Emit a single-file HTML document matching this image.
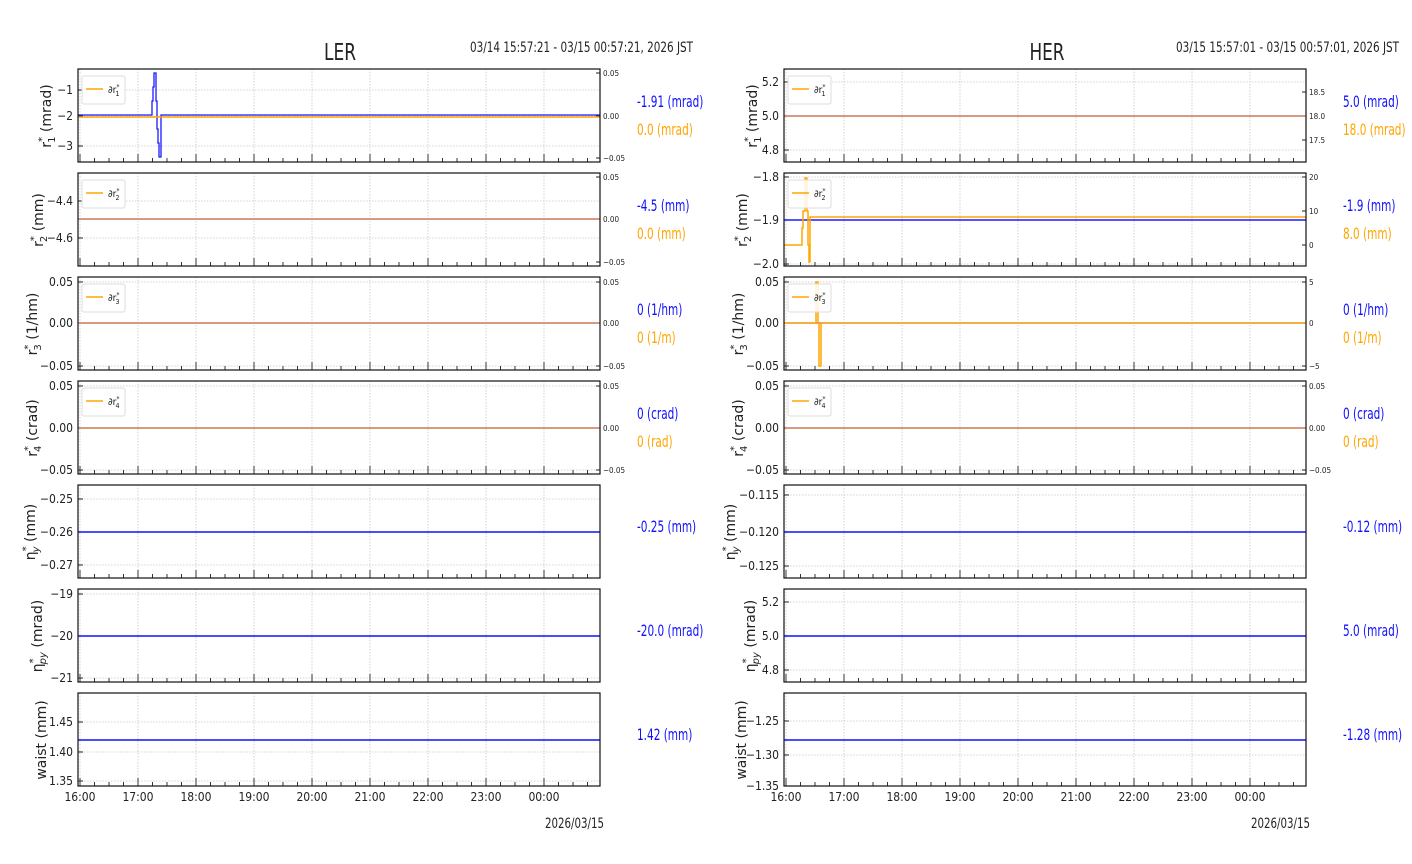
<!DOCTYPE html>
<html><head><meta charset="utf-8"><style>
html,body{margin:0;padding:0;background:#fff;}
svg{display:block;}
text{font-family:"DejaVu Sans Condensed","DejaVu Sans","Liberation Sans",sans-serif;font-stretch:condensed;fill:#222;}
.t{font-size:12px;}
.s{font-size:8px;}
.yl text{font-family:"DejaVu Sans","Liberation Sans",sans-serif;font-stretch:normal;font-size:14px;}
.b{fill:#1010ff;font-size:16px;}
.o{fill:#ffa500;font-size:16px;}
</style></head><body>
<svg id="g" width="1412" height="864" viewBox="0 0 1412 864" xmlns="http://www.w3.org/2000/svg">
<g id="gfx"></g>
<text x="340" y="60" font-size="23" text-anchor="middle" textLength="32" lengthAdjust="spacingAndGlyphs">LER</text>
<text x="470" y="52" font-size="14" textLength="223" lengthAdjust="spacingAndGlyphs">03/14 15:57:21 - 03/15 00:57:21, 2026 JST</text>
<text x="1047" y="60" font-size="23" text-anchor="middle" textLength="35" lengthAdjust="spacingAndGlyphs">HER</text>
<text x="1176" y="52" font-size="14" textLength="223" lengthAdjust="spacingAndGlyphs">03/15 15:57:01 - 03/15 00:57:01, 2026 JST</text>

<g class="t" text-anchor="end">
<text x="73" y="94">−1</text><text x="73" y="120">−2</text><text x="73" y="150">−3</text>
<text x="73" y="205">−4.4</text><text x="73" y="242">−4.6</text>
<text x="73" y="286">0.05</text><text x="73" y="327">0.00</text><text x="73" y="370">−0.05</text>
<text x="73" y="390">0.05</text><text x="73" y="432">0.00</text><text x="73" y="474">−0.05</text>
<text x="73" y="503">−0.25</text><text x="73" y="536">−0.26</text><text x="73" y="569">−0.27</text>
<text x="73" y="598">−19</text><text x="73" y="640">−20</text><text x="73" y="682">−21</text>
<text x="73" y="726">1.45</text><text x="73" y="756">1.40</text><text x="73" y="785">1.35</text>
</g>
<g class="s">
<text x="603" y="76">0.05</text><text x="603" y="119">0.00</text><text x="603" y="161">−0.05</text>
<text x="603" y="180">0.05</text><text x="603" y="222">0.00</text><text x="603" y="265">−0.05</text>
<text x="603" y="285">0.05</text><text x="603" y="326">0.00</text><text x="603" y="369">−0.05</text>
<text x="603" y="389">0.05</text><text x="603" y="431">0.00</text><text x="603" y="473">−0.05</text>
</g>
<g class="t" text-anchor="end">
<text x="779" y="86">5.2</text><text x="779" y="120">5.0</text><text x="779" y="154">4.8</text>
<text x="779" y="181">−1.8</text><text x="779" y="224">−1.9</text><text x="779" y="268">−2.0</text>
<text x="779" y="286">0.05</text><text x="779" y="327">0.00</text><text x="779" y="370">−0.05</text>
<text x="779" y="390">0.05</text><text x="779" y="432">0.00</text><text x="779" y="474">−0.05</text>
<text x="779" y="499">−0.115</text><text x="779" y="536">−0.120</text><text x="779" y="570">−0.125</text>
<text x="779" y="606">5.2</text><text x="779" y="640">5.0</text><text x="779" y="674">4.8</text>
<text x="779" y="725">−1.25</text><text x="779" y="759">−1.30</text><text x="779" y="790">−1.35</text>
</g>
<g class="s">
<text x="1309" y="95">18.5</text><text x="1309" y="119">18.0</text><text x="1309" y="143">17.5</text>
<text x="1309" y="180">20</text><text x="1309" y="214">10</text><text x="1309" y="248">0</text>
<text x="1309" y="285">5</text><text x="1309" y="326">0</text><text x="1309" y="369">−5</text>
<text x="1309" y="389">0.05</text><text x="1309" y="431">0.00</text><text x="1309" y="473">−0.05</text>
</g>

<g class="t" text-anchor="middle">
<text x="80" y="801">16:00</text><text x="138" y="801">17:00</text><text x="196" y="801">18:00</text><text x="254" y="801">19:00</text><text x="312" y="801">20:00</text><text x="370" y="801">21:00</text><text x="428" y="801">22:00</text><text x="486" y="801">23:00</text><text x="544" y="801">00:00</text>
<text x="786" y="801">16:00</text><text x="844" y="801">17:00</text><text x="902" y="801">18:00</text><text x="960" y="801">19:00</text><text x="1018" y="801">20:00</text><text x="1076" y="801">21:00</text><text x="1134" y="801">22:00</text><text x="1192" y="801">23:00</text><text x="1250" y="801">00:00</text>
</g>
<text x="545" y="828" font-size="14" textLength="59" lengthAdjust="spacingAndGlyphs">2026/03/15</text>
<text x="1251" y="828" font-size="14" textLength="59" lengthAdjust="spacingAndGlyphs">2026/03/15</text>

<g class="yl" text-anchor="middle">
<text transform="translate(51,116) rotate(-90)">r<tspan font-size="10" dy="-6">*</tspan><tspan font-size="10" dy="10" dx="-6">1</tspan><tspan dy="-4"> (mrad)</tspan></text>
<text transform="translate(43,220) rotate(-90)">r<tspan font-size="10" dy="-6">*</tspan><tspan font-size="10" dy="10" dx="-6">2</tspan><tspan dy="-4"> (mm)</tspan></text>
<text transform="translate(37,324) rotate(-90)">r<tspan font-size="10" dy="-6">*</tspan><tspan font-size="10" dy="10" dx="-6">3</tspan><tspan dy="-4"> (1/hm)</tspan></text>
<text transform="translate(37,428) rotate(-90)">r<tspan font-size="10" dy="-6">*</tspan><tspan font-size="10" dy="10" dx="-6">4</tspan><tspan dy="-4"> (crad)</tspan></text>
<text transform="translate(35,532) rotate(-90)">η<tspan font-size="10" dy="-6">*</tspan><tspan font-size="10" dy="10" dx="-6" font-style="italic">y</tspan><tspan dy="-4"> (mm)</tspan></text>
<text transform="translate(42,636) rotate(-90)">η<tspan font-size="10" dy="-6">*</tspan><tspan font-size="10" dy="10" dx="-6" font-style="italic">py</tspan><tspan dy="-4"> (mrad)</tspan></text>
<text transform="translate(46,740) rotate(-90)">waist (mm)</text>

<text transform="translate(757,116) rotate(-90)">r<tspan font-size="10" dy="-6">*</tspan><tspan font-size="10" dy="10" dx="-6">1</tspan><tspan dy="-4"> (mrad)</tspan></text>
<text transform="translate(747,220) rotate(-90)">r<tspan font-size="10" dy="-6">*</tspan><tspan font-size="10" dy="10" dx="-6">2</tspan><tspan dy="-4"> (mm)</tspan></text>
<text transform="translate(743,324) rotate(-90)">r<tspan font-size="10" dy="-6">*</tspan><tspan font-size="10" dy="10" dx="-6">3</tspan><tspan dy="-4"> (1/hm)</tspan></text>
<text transform="translate(743,428) rotate(-90)">r<tspan font-size="10" dy="-6">*</tspan><tspan font-size="10" dy="10" dx="-6">4</tspan><tspan dy="-4"> (crad)</tspan></text>
<text transform="translate(735,532) rotate(-90)">η<tspan font-size="10" dy="-6">*</tspan><tspan font-size="10" dy="10" dx="-6" font-style="italic">y</tspan><tspan dy="-4"> (mm)</tspan></text>
<text transform="translate(755,636) rotate(-90)">η<tspan font-size="10" dy="-6">*</tspan><tspan font-size="10" dy="10" dx="-6" font-style="italic">py</tspan><tspan dy="-4"> (mrad)</tspan></text>
<text transform="translate(746,740) rotate(-90)">waist (mm)</text>
</g>

<g font-size="10">
<text x="108" y="93">∂r<tspan font-size="7" dy="-4">*</tspan><tspan font-size="7" dy="7" dx="-4">1</tspan></text>
<text x="108" y="197">∂r<tspan font-size="7" dy="-4">*</tspan><tspan font-size="7" dy="7" dx="-4">2</tspan></text>
<text x="108" y="301">∂r<tspan font-size="7" dy="-4">*</tspan><tspan font-size="7" dy="7" dx="-4">3</tspan></text>
<text x="108" y="405">∂r<tspan font-size="7" dy="-4">*</tspan><tspan font-size="7" dy="7" dx="-4">4</tspan></text>
<text x="814" y="93">∂r<tspan font-size="7" dy="-4">*</tspan><tspan font-size="7" dy="7" dx="-4">1</tspan></text>
<text x="814" y="197">∂r<tspan font-size="7" dy="-4">*</tspan><tspan font-size="7" dy="7" dx="-4">2</tspan></text>
<text x="814" y="301">∂r<tspan font-size="7" dy="-4">*</tspan><tspan font-size="7" dy="7" dx="-4">3</tspan></text>
<text x="814" y="405">∂r<tspan font-size="7" dy="-4">*</tspan><tspan font-size="7" dy="7" dx="-4">4</tspan></text>
</g>

<g transform="translate(637,0) scale(0.73,1) translate(-637,0)">
<text class="b" x="637" y="107">-1.91 (mrad)</text><text class="o" x="637" y="135">0.0 (mrad)</text>
<text class="b" x="637" y="211">-4.5 (mm)</text><text class="o" x="637" y="239">0.0 (mm)</text>
<text class="b" x="637" y="315">0 (1/hm)</text><text class="o" x="637" y="343">0 (1/m)</text>
<text class="b" x="637" y="419">0 (crad)</text><text class="o" x="637" y="447">0 (rad)</text>
<text class="b" x="637" y="532">-0.25 (mm)</text>
<text class="b" x="637" y="636">-20.0 (mrad)</text>
<text class="b" x="637" y="740">1.42 (mm)</text>
</g>
<g transform="translate(1343,0) scale(0.73,1) translate(-1343,0)">
<text class="b" x="1343" y="107">5.0 (mrad)</text><text class="o" x="1343" y="135">18.0 (mrad)</text>
<text class="b" x="1343" y="211">-1.9 (mm)</text><text class="o" x="1343" y="239">8.0 (mm)</text>
<text class="b" x="1343" y="315">0 (1/hm)</text><text class="o" x="1343" y="343">0 (1/m)</text>
<text class="b" x="1343" y="419">0 (crad)</text><text class="o" x="1343" y="447">0 (rad)</text>
<text class="b" x="1343" y="532">-0.12 (mm)</text>
<text class="b" x="1343" y="636">5.0 (mrad)</text>
<text class="b" x="1343" y="740">-1.28 (mm)</text>
</g>
</svg>
<script>
(function(){
var NS="http://www.w3.org/2000/svg",G=document.getElementById('gfx');
function el(t,a){var e=document.createElementNS(NS,t);for(var k in a)e.setAttribute(k,a[k]);G.appendChild(e);return e;}
function ln(x1,y1,x2,y2,c,w,d){var a={x1:x1,y1:y1,x2:x2,y2:y2,stroke:c,'stroke-width':w||1};if(d)a['stroke-dasharray']=d;el('line',a);}
function pl(p,c,w){el('polyline',{points:p,fill:'none',stroke:c,'stroke-width':w||1.5});}
var rowsL=[[90,116,146],[201,238],[282,323,366],[386,428,470],[499,532,565],[594,636,678],[722,752,781]];
var rowsR=[[82,116,150],[177,220,264],[282,323,366],[386,428,470],[495,532,566],[602,636,670],[721,755,786]];
var rightL=[[73,116,158],[177,219,262],[282,323,366],[386,428,470]];
var rightR=[[92,116,140],[177,211,245],[282,323,366],[386,428,470]];
var lineY=[116,219,323,428,532,636,740];
[[78,80,rowsL,rightL],[784,786,rowsR,rightR]].forEach(function(P,pi){
 var X=P[0],x0=P[1],W=522;
 for(var r=0;r<7;r++){
  var T=69+104*r,B=T+93;
  for(var h=0;h<9;h++){var gx=x0+58*h;ln(gx,T,gx,B,'#c8c8c8',0.8,'1.5,1.5');}
  P[2][r].forEach(function(y){ln(X,y,X+W,y,'#c8c8c8',0.8,'1.5,1.5');ln(X,y,X+5,y,'#222',1);});
  for(var m=0;m<36;m++){var tx=x0+14.5*m;if(tx>X+W)break;ln(tx,B,tx,B-(m%4==0?8:4),'#333',1);}
  if(r<4){P[3][r].forEach(function(y){ln(X+W,y,X+W-4,y,'#222',1);});}
  var y=lineY[r];
  if(pi==0&&r==0){
   pl('78,115 152,115 152,101 153,101 153,87 154,87 154,73 156,73 156,101 157,101 157,129 158,129 158,143 159,143 159,157 161,157 161,115 600,115','#1a1aff',1.3);
   ln(78,117,600,117,'#ffa500',1.5);
  } else if(pi==1&&r==1){
   ln(784,220,1306,220,'#1a1aff',1.5);
   pl('784,245 802,245 802,228 803,228 803,211 805,211 805,178 807,178 807,211 808,211 808,245 809,245 809,262 810,262 810,217 1306,217','#ffa500',1.5);
  } else if(pi==1&&r==2){
   ln(784,323,1306,323,'#4040ff',1.2);
   pl('784,323 816,323 816,282 818,282 818,323 819,323 819,366 821,366 821,323 1306,323','#ffa500',1.5);
  } else if(r<4){
   ln(X,y,X+W,y,'#c47a7a',1.6);ln(X,y+0.6,X+W,y+0.6,'#f0a060',0.8);
  } else {ln(X,y,X+W,y,'#1010ff',1.5);}
  el('rect',{x:X,y:T,width:W,height:93,fill:'none',stroke:'#111','stroke-width':1.2});
  if(r<4){
   el('rect',{x:X+4,y:T+7,width:43,height:28,rx:2,fill:'#fff','fill-opacity':0.85,stroke:'#ddd','stroke-width':1});
   ln(X+8,T+20,X+25,T+20,'#ffa500',1.5);
  }
 }
});
})();
</script>
</body></html>
